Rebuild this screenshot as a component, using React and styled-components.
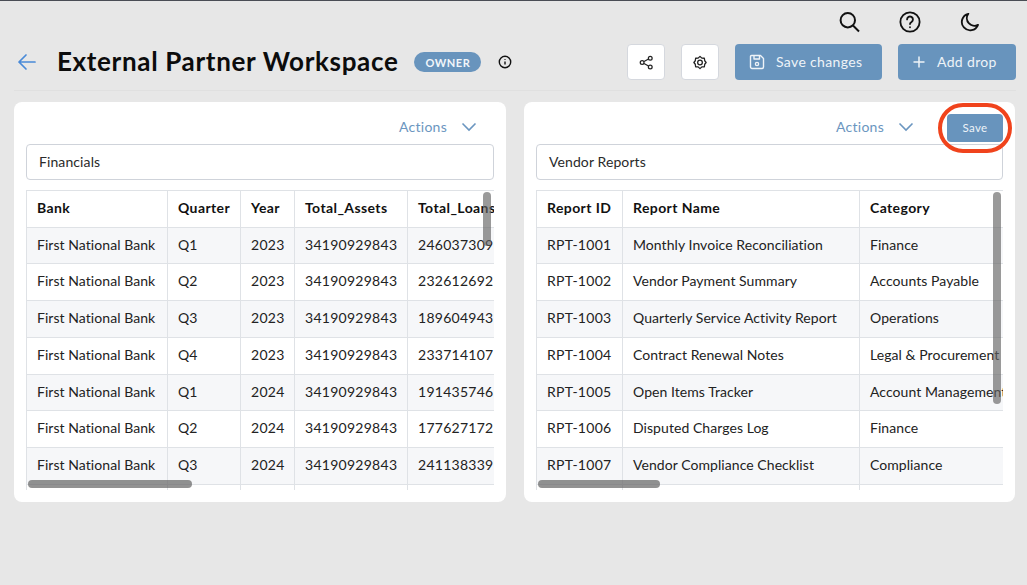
import React from "react";
import styled, { createGlobalStyle } from "styled-components";

const Global = createGlobalStyle`
  html, body { margin: 0; padding: 0; background: #e7e7e7; }
  body { font-family: "Lato", "Open Sans", "Liberation Sans", sans-serif; color: #111; }
  * { box-sizing: border-box; }
`;

const Page = styled.div`
  width: 1027px;
  height: 585px;
  overflow: hidden;
  background: #e7e7e7;
  border-top: 1px solid #4a4d55;
`;

const TopBar = styled.div`
  height: 43px;
  display: flex;
  justify-content: flex-end;
  align-items: flex-start;
  gap: 36px;
  padding: 10px 46px 0 0;
`;

const IconSlot = styled.span`
  width: 24px;
  height: 22px;
  display: flex;
  align-items: center;
  justify-content: center;
  color: #111;
`;

const Header = styled.div`
  height: 47px;
  margin: 0 11px 0 14px;
  padding: 0 0 10px 3px;
  border-bottom: 1px solid #e0e0e0;
  display: flex;
  align-items: center;
`;

const Title = styled.h1`
  margin: 0 0 2px 20px;
  font-size: 26px;
  line-height: 36px;
  font-weight: 700;
  letter-spacing: 0.66px;
  color: #0c0c0c;
`;

const Badge = styled.span`
  margin-left: 16px;
  width: 67px;
  height: 20px;
  border-radius: 10px;
  background: #6894bd;
  color: #f2f6fa;
  font-size: 11px;
  font-weight: 700;
  letter-spacing: 0.5px;
  display: flex;
  align-items: center;
  justify-content: center;
`;

const InfoSlot = styled.span`
  margin-left: 17px;
  display: flex;
`;

const Spacer = styled.div`
  flex: 1;
`;

const SquareButton = styled.button`
  width: 38px;
  height: 36px;
  margin-right: 16px;
  padding: 0;
  background: #fff;
  border: 1px solid #d5d8de;
  border-radius: 4px;
  display: flex;
  align-items: center;
  justify-content: center;
  color: #222;
`;

const PrimaryButton = styled.button`
  height: 36px;
  width: ${(p) => p.$width}px;
  margin-left: ${(p) => p.$gap || 0}px;
  padding: 0 0 0 14px;
  border: 0;
  border-radius: 4px;
  background: #6894bd;
  color: #eef3f8;
  font-family: inherit;
  font-size: 14px;
  letter-spacing: 0.35px;
  display: flex;
  align-items: center;
  gap: 11px;
`;

const ButtonText = styled.span`
  padding-bottom: 2px;
`;

const Panels = styled.div`
  margin: 11px 12px 0 14px;
  display: grid;
  grid-template-columns: 492px 491px;
  gap: 18px;
`;

const Panel = styled.section`
  height: 400px;
  background: #fff;
  border-radius: 8px;
  padding: 0 12px;
  position: relative;
`;

const ActionsRow = styled.div`
  height: 42px;
  padding: 7px 0 0 0;
  display: flex;
  align-items: flex-start;
  justify-content: flex-end;
`;

const ActionsLabel = styled.div`
  height: 36px;
  margin-right: ${(p) => p.$right}px;
  display: flex;
  align-items: center;
  gap: 14px;
  color: #6b96c0;
  font-size: 14px;
  letter-spacing: 0.25px;
  padding-bottom: 1px;
`;

const SaveButton = styled.button`
  width: 56px;
  height: 28px;
  margin-top: 5px;
  border: 0;
  padding: 0 0 1px;
  border-radius: 4px;
  background: #6894bd;
  color: #eef3f8;
  font-family: inherit;
  font-size: 11.5px;
  letter-spacing: 0.3px;
`;

const Ring = styled.span`
  position: absolute;
  left: 414px;
  top: 1px;
  width: 74px;
  height: 50px;
  border: 4px solid #f0431c;
  border-radius: 25px;
  pointer-events: none;
`;

const NameField = styled.div`
  height: 36px;
  border: 1px solid #cfd3da;
  border-radius: 4px;
  padding: 0 12px 2px;
  display: flex;
  align-items: center;
  font-size: 14px;
  letter-spacing: 0.1px;
  color: #2a2a2a;
`;

const TableWrap = styled.div`
  position: relative;
  margin-top: 10px;
  height: 300px;
  overflow: hidden;
`;

const Table = styled.table`
  border-collapse: collapse;
  table-layout: fixed;
  width: ${(p) => p.$width}px;
  font-size: 14px;
  color: #222;
`;

const HeadCell = styled.th`
  height: 36.5px;
  padding: 0 10px 3px;
  text-align: left;
  font-weight: 700;
  font-size: 14px;
  letter-spacing: 0.4px;
  color: #111;
  white-space: nowrap;
  overflow: hidden;
  border: 1px solid #dfe2e6;
`;

const Row = styled.tr`
  background: ${(p) => (p.$odd ? "#f6f7f9" : "#fff")};
`;

const Cell = styled.td`
  height: 36.75px;
  padding: 0 10px 2.500px;
  white-space: nowrap;
  overflow: hidden;
  letter-spacing: ${(p) => (p.$numeric ? "0.27px" : "0.06px")};
  border: 1px solid #dfe2e6;
`;

const ThumbV = styled.span`
  position: absolute;
  top: 2px;
  right: ${(p) => p.$right}px;
  width: 8px;
  height: ${(p) => p.$h}px;
  border-radius: 4px;
  background: rgba(100, 100, 100, 0.65);
`;

const ThumbH = styled.span`
  position: absolute;
  left: 2px;
  top: 290px;
  height: 8px;
  width: ${(p) => p.$w}px;
  border-radius: 4px;
  background: rgba(100, 100, 100, 0.7);
`;

const Search = () => (
  <svg width="24" height="24" viewBox="0 0 24 24" fill="none" stroke="#111" strokeWidth="2">
    <circle cx="10.8" cy="10.2" r="7.2" />
    <path d="M16 15.5l6 6" />
  </svg>
);
const Help = () => (
  <svg width="22" height="22" viewBox="0 0 24 24" fill="none" stroke="#111" strokeWidth="2" strokeLinecap="round" style={{ marginLeft: 2 }}>
    <circle cx="12" cy="12" r="10.5" />
    <path d="M8.800 9.200a3.200 3.200 0 1 1 4.900 2.700c-1 .6-1.700 1.200-1.700 2.400" />
    <path d="M12 17.600v.2" />
  </svg>
);
const Moon = () => (
  <svg width="20" height="20" viewBox="0 0 24 24" fill="none" stroke="#111" strokeWidth="2.200" strokeLinejoin="round" style={{ marginLeft: 2 }}>
    <path d="M10 2.200a10 10 0 1 0 11.600 13.200A9 9 0 0 1 10 2.200z" />
  </svg>
);
const Back = () => (
  <svg width="20" height="18" viewBox="0 0 20 18" fill="none" stroke="#4a8ad8" strokeWidth="1.700" strokeLinecap="round" strokeLinejoin="round">
    <path d="M2 9h16M9 2L2 9l7 7" />
  </svg>
);
const Info = () => (
  <svg width="14" height="14" viewBox="0 0 14 14" fill="none" stroke="#111" strokeWidth="1.400">
    <circle cx="7" cy="7" r="5.700" />
    <path d="M7 6.400v3.200M7 4.200v.9" />
  </svg>
);
const Share = () => (
  <svg width="15" height="15" viewBox="0 0 24 24" fill="none" stroke="#222" strokeWidth="2">
    <circle cx="18" cy="5" r="3" />
    <circle cx="5" cy="12" r="3" />
    <circle cx="18" cy="19" r="3" />
    <path d="M8 10.500l7.300-4M8 13.500l7.300 4" />
  </svg>
);
const Gear = () => (
  <svg width="14" height="15" viewBox="0 0 24 24" fill="none" stroke="#222" strokeWidth="2.200" strokeLinejoin="round">
    <path d="M12 1.500l3.200 3 4.300.2.600 4.300L22.500 12l-2.400 3-.6 4.300-4.300.2-3.200 3-3.200-3-4.300-.2-.6-4.300L1.500 12l2.400-3 .6-4.300 4.300-.2z" />
    <circle cx="12" cy="12" r="4" />
  </svg>
);
const Floppy = () => (
  <svg width="16" height="16" viewBox="0 0 16 16" fill="none" stroke="#eef3f8" strokeWidth="1.400" strokeLinejoin="round">
    <path d="M2.500 1.500h9l3 3v8.500a1.500 1.500 0 0 1-1.500 1.500H3A1.500 1.500 0 0 1 1.500 13V2.500a1 1 0 0 1 1-1z" />
    <path d="M5 1.500v3.500h5.500V1.500" />
    <circle cx="8" cy="10" r="1.600" />
  </svg>
);
const Plus = () => (
  <svg width="14" height="14" viewBox="0 0 14 14" fill="none" stroke="#eef3f8" strokeWidth="1.500">
    <path d="M7 1.500v11M1.500 7h11" />
  </svg>
);
const Chevron = () => (
  <svg width="16" height="10" viewBox="0 0 16 10" fill="none" stroke="#6b96c0" strokeWidth="1.600">
    <path d="M1.500 1.500L8 8l6.500-6.500" />
  </svg>
);

const finColumns = [141, 73, 54, 113, 120];
const finHead = ["Bank", "Quarter", "Year", "Total_Assets", "Total_Loans"];
const finRows = [
  ["Q1", "2023", "246037309"],
  ["Q2", "2023", "232612692"],
  ["Q3", "2023", "189604943"],
  ["Q4", "2023", "233714107"],
  ["Q1", "2024", "191435746"],
  ["Q2", "2024", "177627172"],
  ["Q3", "2024", "241138339"],
]
  .map(([q, y, l]) => ["First National Bank", q, y, "34190929843", l])
  .concat([["", "", "", "", ""]]);

const venColumns = [86, 237, 160];
const venHead = ["Report ID", "Report Name", "Category"];
const venRows = [
  ["RPT-1001", "Monthly Invoice Reconciliation", "Finance"],
  ["RPT-1002", "Vendor Payment Summary", "Accounts Payable"],
  ["RPT-1003", "Quarterly Service Activity Report", "Operations"],
  ["RPT-1004", "Contract Renewal Notes", "Legal & Procurement"],
  ["RPT-1005", "Open Items Tracker", "Account Management"],
  ["RPT-1006", "Disputed Charges Log", "Finance"],
  ["RPT-1007", "Vendor Compliance Checklist", "Compliance"],
  ["", "", ""],
];

const DataTable = ({ columns, head, rows }) => (
  <Table $width={columns.reduce((a, b) => a + b, 0)}>
    <colgroup>
      {columns.map((w, i) => (
        <col key={i} width={w} />
      ))}
    </colgroup>
    <thead>
      <tr>
        {head.map((h) => (
          <HeadCell key={h}>{h}</HeadCell>
        ))}
      </tr>
    </thead>
    <tbody>
      {rows.map((r, i) => (
        <Row key={i} $odd={i % 2 === 0}>
          {r.map((c, j) => (
            <Cell key={j} $numeric={/\d{3}/.test(c)}>{c}</Cell>
          ))}
        </Row>
      ))}
    </tbody>
  </Table>
);

export default function App() {
  return (
    <Page>
      <Global />
      <TopBar>
        <IconSlot><Search /></IconSlot>
        <IconSlot><Help /></IconSlot>
        <IconSlot><Moon /></IconSlot>
      </TopBar>
      <Header>
        <Back />
        <Title>External Partner Workspace</Title>
        <Badge>OWNER</Badge>
        <InfoSlot><Info /></InfoSlot>
        <Spacer />
        <SquareButton><Share /></SquareButton>
        <SquareButton><Gear /></SquareButton>
        <PrimaryButton $width={147}><Floppy /><ButtonText>Save changes</ButtonText></PrimaryButton>
        <PrimaryButton $width={118} $gap={16}><Plus /><ButtonText>Add drop</ButtonText></PrimaryButton>
      </Header>
      <Panels>
        <Panel>
          <ActionsRow>
            <ActionsLabel $right={17}>Actions<Chevron /></ActionsLabel>
          </ActionsRow>
          <NameField>Financials</NameField>
          <TableWrap>
            <DataTable columns={finColumns} head={finHead} rows={finRows} />
            <ThumbV $right={3} $h={54} />
            <ThumbH $w={164} />
          </TableWrap>
        </Panel>
        <Panel>
          <ActionsRow>
            <ActionsLabel $right={33}>Actions<Chevron /></ActionsLabel>
            <SaveButton>Save</SaveButton>
          </ActionsRow>
          <Ring />
          <NameField>Vendor Reports</NameField>
          <TableWrap>
            <DataTable columns={venColumns} head={venHead} rows={venRows} />
            <ThumbV $right={2} $h={212} />
            <ThumbH $w={122} />
          </TableWrap>
        </Panel>
      </Panels>
    </Page>
  );
}
